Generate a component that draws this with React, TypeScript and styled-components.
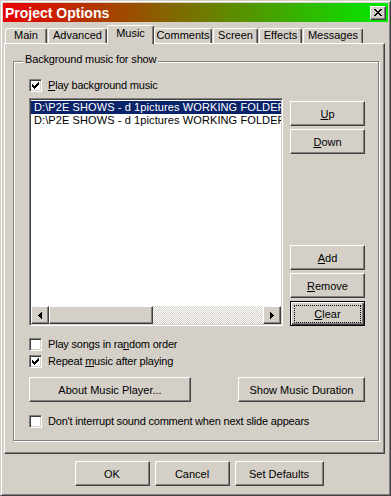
import React from 'react';
import styled, { createGlobalStyle, css } from 'styled-components';

const FACE = '#d4d0c8';
const FONT = '"Liberation Sans", Arial, sans-serif';

const Global = createGlobalStyle`
  html, body { margin: 0; padding: 0; background: ${FACE}; }
  body { font-family: ${FONT}; font-size: 11px; color: #000; }
  *, *::before, *::after { box-sizing: border-box; }
`;

const raised = css`
  background: ${FACE};
  border: 1px solid;
  border-color: #fff #404040 #404040 #fff;
  box-shadow: inset -1px -1px #808080;
`;

const Window = styled.div`
  width: 391px;
  height: 496px;
  background: ${FACE};
  border: 1px solid;
  border-color: ${FACE} #404040 #404040 ${FACE};
  box-shadow: inset 1px 1px #fff, inset -1px -1px #808080;
  padding: 2px;
  display: flex;
  flex-direction: column;
`;

const TitleBar = styled.div`
  height: 19px;
  flex: none;
  background: linear-gradient(to right, #e80000, #00ea00);
  display: flex;
  align-items: center;
  justify-content: space-between;
  padding-left: 2px;
`;

const TitleText = styled.span`
  font: bold 14px ${FONT};
  color: #fff;
  line-height: 19px;
  padding-top: 1px;
`;

const CloseBtn = styled.div`
  ${raised}
  width: 16px;
  height: 14px;
  margin-right: 2px;
  display: flex;
  align-items: center;
  justify-content: center;
`;

const TabStrip = styled.div`
  height: 21px;
  flex: none;
  display: flex;
  align-items: flex-end;
  padding-left: 2px;
`;

const Tab = styled.div<{ $w: number; $active?: boolean }>`
  width: ${p => p.$w}px;
  height: 15px;
  margin-right: 1px;
  background: ${FACE};
  border: 1px solid;
  border-bottom: none;
  border-color: #fff #404040 transparent #fff;
  border-radius: 2px 3px 0 0;
  box-shadow: inset -1px 0 #808080;
  display: flex;
  justify-content: center;
  align-items: flex-start;
  line-height: 13px;
  white-space: nowrap;
  ${p =>
    p.$active &&
    css`
      width: ${p.$w + 2}px;
      height: 19px;
      margin-left: -1px;
      margin-right: 0;
      margin-bottom: -1px;
      padding-top: 1px;
      position: relative;
      z-index: 1;
    `}
`;

const Panel = styled.div`
  height: 411px;
  flex: none;
  margin: 0 3px 0 1px;
  border: 1px solid;
  border-color: #fff #404040 #404040 #fff;
  box-shadow: inset -1px -1px #808080;
  padding: 17px 0 0 8px;
`;

const Group = styled.div`
  position: relative;
  width: 366px;
  border: 1px solid #808080;
  box-shadow: 1px 1px 0 #fff, inset 1px 1px 0 #fff;
  padding: 17px 13px 12px 15px;
  display: flex;
  flex-direction: column;
`;

const GroupLabel = styled.span`
  position: absolute;
  top: -9px;
  left: 9px;
  padding: 0 2px;
  background: ${FACE};
  line-height: 13px;
  letter-spacing: -0.15px;
`;

const CheckRow = styled.label<{ $mt?: number }>`
  display: flex;
  align-items: center;
  gap: 6px;
  height: 13px;
  margin-top: ${p => p.$mt ?? 0}px;
  line-height: 13px;
  white-space: nowrap;
  letter-spacing: -0.2px;
`;

const Box = styled.span`
  width: 13px;
  height: 13px;
  flex: none;
  background: #fff;
  border: 1px solid;
  border-color: #808080 #fff #fff #808080;
  box-shadow: inset 1px 1px #404040, inset -1px -1px ${FACE};
  display: flex;
  align-items: center;
  justify-content: center;
`;

const Key = styled.span`
  text-decoration: underline;
  text-underline-offset: 1px;
`;

const ListRow = styled.div`
  display: flex;
  gap: 7px;
  margin-top: 6px;
  height: 228px;
`;

const ListBox = styled.div`
  flex: 1;
  background: #fff;
  border: 1px solid;
  border-color: #808080 #fff #fff #808080;
  box-shadow: inset 1px 1px #404040, inset -1px -1px ${FACE};
  padding: 1px;
  display: flex;
  flex-direction: column;
  min-width: 0;
`;

const Items = styled.div`
  flex: 1;
  overflow: hidden;
  padding-top: 1px;
`;

const Item = styled.div<{ $sel?: boolean }>`
  height: 13px;
  line-height: 13px;
  padding-left: 3px;
  white-space: nowrap;
  overflow: hidden;
  letter-spacing: 0.1px;
  background: ${p => (p.$sel ? '#0a246a' : 'transparent')};
  color: ${p => (p.$sel ? '#fff' : '#000')};
`;

const HScroll = styled.div`
  height: 18px;
  flex: none;
  display: flex;
`;

const ScrollBtn = styled.div`
  ${raised}
  width: 18px;
  height: 18px;
  flex: none;
  display: flex;
  align-items: center;
  justify-content: center;
`;

const Thumb = styled.div`
  ${raised}
  width: 104px;
  flex: none;
`;

const Track = styled.div`
  flex: 1;
  background-color: ${FACE};
  background-image: conic-gradient(#fff 25%, ${FACE} 0 50%, #fff 0 75%, ${FACE} 0);
  background-size: 2px 2px;
`;

const BtnCol = styled.div`
  width: 75px;
  display: flex;
  flex-direction: column;
  justify-content: space-between;
  padding-top: 3px;
`;

const BtnStack = styled.div`
  display: flex;
  flex-direction: column;
  gap: 3px;
`;

const Btn = styled.button<{ $w?: number; $default?: boolean }>`
  ${raised}
  width: ${p => (p.$w ? `${p.$w}px` : '100%')};
  height: 25px;
  flex: none;
  margin: 0;
  padding: 0;
  font: 11px ${FONT};
  color: #000;
  display: flex;
  align-items: center;
  justify-content: center;
  position: relative;
  white-space: nowrap;
  ${p =>
    p.$default &&
    css`
      border-color: #000;
      box-shadow: inset 1px 1px #fff, inset -1px -1px #404040, inset -2px -2px #808080;
      &::after {
        content: '';
        position: absolute;
        inset: 3px 3px 2px 3px;
        border: 1px dotted #000;
      }
    `}
`;

const ActionRow = styled.div`
  display: flex;
  justify-content: space-between;
  margin-top: 9px;
`;

const Footer = styled.div`
  flex: 1;
  display: flex;
  justify-content: center;
  align-items: flex-start;
  gap: 5px;
  padding: 7px 0 0 7px;
`;

const px = (cells: [number, number][], w: number, h: number) => (
  <svg width={w} height={h} viewBox={`0 0 ${w} ${h}`} shapeRendering="crispEdges">
    {cells.map(([x, y], i) => (
      <rect key={i} x={x} y={y} width={1} height={1} fill="#000" />
    ))}
  </svg>
);

const CloseGlyph = () => {
  const rows: number[][] = [
    [0, 1, 6, 7],
    [1, 2, 5, 6],
    [2, 3, 4, 5],
    [3, 4],
    [2, 3, 4, 5],
    [1, 2, 5, 6],
    [0, 1, 6, 7],
  ];
  const cells: [number, number][] = [];
  rows.forEach((r, y) => r.forEach(x => cells.push([x, y])));
  return px(cells, 8, 7);
};

const CheckGlyph = () => {
  const tops = [2, 3, 4, 3, 2, 1, 0];
  const cells: [number, number][] = [];
  tops.forEach((t, x) => {
    for (let k = 0; k < 3; k++) cells.push([x, t + k]);
  });
  return px(cells, 7, 7);
};

const Arrow = ({ dir }: { dir: 'left' | 'right' }) => {
  const cells: [number, number][] = [];
  for (let c = 0; c < 4; c++) {
    const x = dir === 'left' ? c : 3 - c;
    for (let y = 3 - c; y <= 3 + c; y++) cells.push([x, y]);
  }
  return px(cells, 4, 7);
};

const Check = ({ checked, children, mt }: { checked?: boolean; children: React.ReactNode; mt?: number }) => (
  <CheckRow $mt={mt}>
    <Box>{checked && <CheckGlyph />}</Box>
    <span>{children}</span>
  </CheckRow>
);

const tabs: { label: string; w: number; active?: boolean }[] = [
  { label: 'Main', w: 42 },
  { label: 'Advanced', w: 59 },
  { label: 'Music', w: 45, active: true },
  { label: 'Comments', w: 58 },
  { label: 'Screen', w: 45 },
  { label: 'Effects', w: 43 },
  { label: 'Messages', w: 60 },
];

const path = 'D:\\P2E SHOWS - d 1pictures WORKING FOLDER\\';

export default function App() {
  return (
    <>
      <Global />
      <Window>
        <TitleBar>
          <TitleText>Project Options</TitleText>
          <CloseBtn>
            <CloseGlyph />
          </CloseBtn>
        </TitleBar>
        <TabStrip>
          {tabs.map(t => (
            <Tab key={t.label} $w={t.w} $active={t.active}>
              {t.label}
            </Tab>
          ))}
        </TabStrip>
        <Panel>
          <Group>
            <GroupLabel>Background music for show</GroupLabel>
            <Check checked>
              <Key>P</Key>lay background music
            </Check>
            <ListRow>
              <ListBox>
                <Items>
                  <Item $sel>{path}</Item>
                  <Item>{path}</Item>
                </Items>
                <HScroll>
                  <ScrollBtn>
                    <Arrow dir="left" />
                  </ScrollBtn>
                  <Thumb />
                  <Track />
                  <ScrollBtn>
                    <Arrow dir="right" />
                  </ScrollBtn>
                </HScroll>
              </ListBox>
              <BtnCol>
                <BtnStack>
                  <Btn>
                    <Key>U</Key>p
                  </Btn>
                  <Btn>
                    <Key>D</Key>own
                  </Btn>
                </BtnStack>
                <BtnStack>
                  <Btn>
                    <Key>A</Key>dd
                  </Btn>
                  <Btn>
                    <Key>R</Key>emove
                  </Btn>
                  <Btn $default>
                    <Key>C</Key>lear
                  </Btn>
                </BtnStack>
              </BtnCol>
            </ListRow>
            <Check mt={12}>
              Play songs in ra<Key>n</Key>dom order
            </Check>
            <Check checked mt={4}>
              Repeat <Key>m</Key>usic after playing
            </Check>
            <ActionRow>
              <Btn $w={162}>About Music Player...</Btn>
              <Btn $w={127}>Show Music Duration</Btn>
            </ActionRow>
            <Check mt={13}>Don't interrupt sound comment when next slide appears</Check>
          </Group>
        </Panel>
        <Footer>
          <Btn $w={75}>OK</Btn>
          <Btn $w={75}>Cancel</Btn>
          <Btn $w={89}>Set Defaults</Btn>
        </Footer>
      </Window>
    </>
  );
}
